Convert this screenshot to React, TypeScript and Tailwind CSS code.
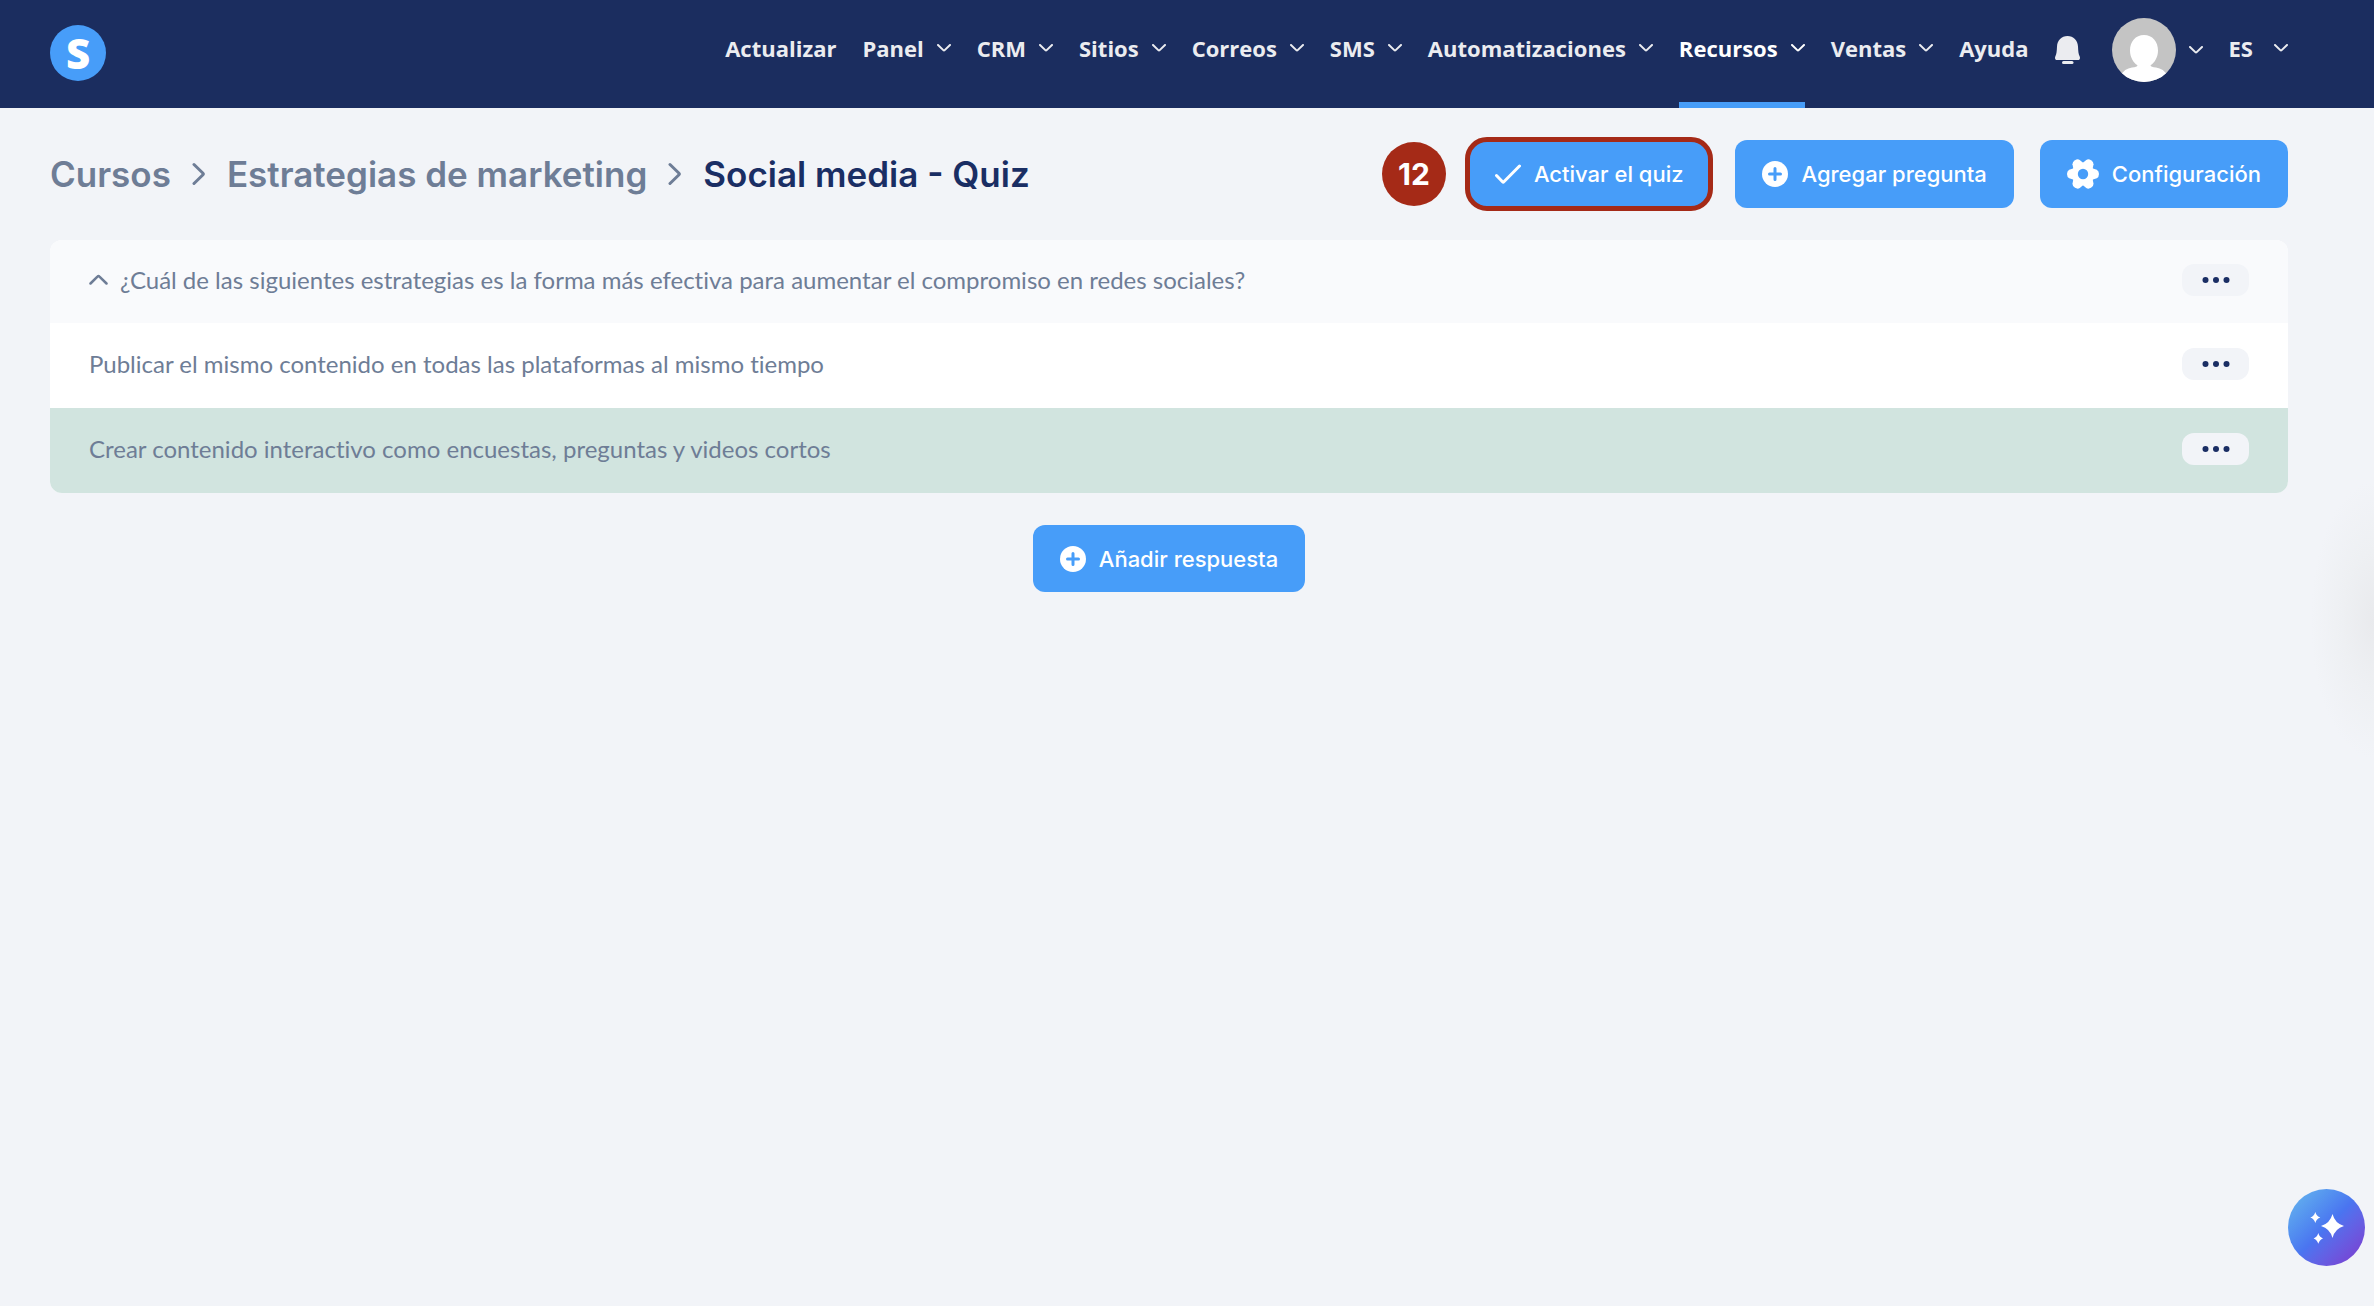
import { clsx } from 'clsx';
import type { ReactNode } from 'react';

const navItems = [
  { label: 'Actualizar', menu: false },
  { label: 'Panel', menu: true },
  { label: 'CRM', menu: true },
  { label: 'Sitios', menu: true },
  { label: 'Correos', menu: true },
  { label: 'SMS', menu: true },
  { label: 'Automatizaciones', menu: true },
  { label: 'Recursos', menu: true, active: true },
  { label: 'Ventas', menu: true },
  { label: 'Ayuda', menu: false },
];

const answers = [
  { text: 'Publicar el mismo contenido en todas las plataformas al mismo tiempo', correct: false },
  { text: 'Crear contenido interactivo como encuestas, preguntas y videos cortos', correct: true },
];

function ChevronDown() {
  return (
    <svg width="14" height="8" viewBox="0 0 14 8" fill="none" stroke="currentColor" strokeWidth="2" strokeLinecap="round" strokeLinejoin="round" aria-hidden="true">
      <path d="M1 1l5.3 5.1a1 1 0 0 0 1.4 0L13 1" />
    </svg>
  );
}

function ChevronRight() {
  return (
    <svg width="14" height="24" viewBox="0 0 14 24" fill="none" stroke="currentColor" strokeWidth="3" strokeLinecap="round" strokeLinejoin="round" aria-hidden="true">
      <path d="M2 2.5l9 8.8a1 1 0 0 1 0 1.4l-9 8.8" />
    </svg>
  );
}

function PlusCircle() {
  return (
    <svg width="26" height="26" viewBox="0 0 26 26" aria-hidden="true">
      <circle cx="13" cy="13" r="13" fill="currentColor" />
      <path d="M13 7.5v11M7.5 13h11" stroke="#479df9" strokeWidth="3" strokeLinecap="round" />
    </svg>
  );
}

function Gear() {
  return (
    <svg width="32" height="32" viewBox="0 0 32 32" fill="currentColor" aria-hidden="true">
      <circle cx="16" cy="16" r="11.3" />
      {[0, 60, 120].map((angle) => (
        <path
          key={angle}
          transform={`rotate(${angle} 16 16)`}
          d="M6 10.500h20l3.800 1.300Q32 13 32 16t-2.200 4.200L26 21.500H6l-3.800-1.300Q0 19 0 16t2.200-4.200z"
        />
      ))}
      <circle cx="16" cy="16" r="5.2" fill="#479df9" />
    </svg>
  );
}

function Avatar() {
  return (
    <svg width="64" height="64" viewBox="0 0 64 64" className="rounded-full bg-[#c4c4c4]" role="img" aria-label="Perfil">
      <path
        fill="#fff"
        d="M32 17c8.500 0 14 6.500 14 15.500 0 6.500-3.200 12.200-7.500 14.800.3 1.500 2 2 5.500 2.200 5 .6 9 3.500 12 8.500V64H8v-6c3-5 7-7.900 12-8.500 3.500-.2 5.200-.7 5.500-2.200-4.300-2.600-7.500-8.300-7.500-14.800C18 23.500 23.500 17 32 17z"
      />
    </svg>
  );
}

function PrimaryButton({ icon, children, className }: { icon: ReactNode; children: ReactNode; className?: string }) {
  return (
    <button
      type="button"
      className={clsx('flex items-center gap-[13px] bg-[#479df9] text-[22px] leading-7 font-medium text-white', className)}
    >
      {icon}
      {children}
    </button>
  );
}

function MoreButton() {
  return (
    <button type="button" aria-label="Más opciones" className="flex h-8 w-[67px] items-center justify-center rounded-xl bg-[#f2f4f8]">
      <svg width="28" height="6" viewBox="0 0 28 6" fill="#1a2e64" aria-hidden="true">
        <circle cx="3.500" cy="3" r="3" />
        <circle cx="14" cy="3" r="3" />
        <circle cx="24.500" cy="3" r="3" />
      </svg>
    </button>
  );
}

function Header() {
  return (
    <header className="flex h-[108px] items-start justify-between bg-[#1b2d5f] pr-[86px] pl-[50px] font-['Open_Sans',sans-serif] text-[22px] leading-8 font-bold text-[#ebecf0]">
      <a
        href="#inicio"
        aria-label="Inicio"
        className="mt-[25px] flex size-14 items-center justify-center rounded-full bg-[#479df9] text-[42px] leading-none font-extrabold text-white"
      >
        S
      </a>
      <div className="flex">
        <nav className="flex gap-[26px]">
          {navItems.map((item) => (
            <a
              key={item.label}
              href={`#${item.label.toLowerCase()}`}
              className={clsx(
                'flex h-[108px] items-center gap-[13px] border-b-6 pb-1.5',
                item.active ? 'border-[#479df9] text-white' : 'border-transparent',
              )}
            >
              {item.label}
              {item.menu && <ChevronDown />}
            </a>
          ))}
        </nav>
        <div className="flex h-[100px] items-center">
          <button type="button" aria-label="Notificaciones" className="ml-[26px]">
            <svg width="25" height="28" viewBox="0 0 25 28" fill="currentColor" aria-hidden="true">
              <path d="M12.500 0C6.500 0 2.300 4.200 2 10.500c-.2 5-.5 7.500-1.600 9.800C-.5 22.300.2 24 2 24h21c1.800 0 2.500-1.700 1.600-3.700-1.100-2.300-1.400-4.800-1.600-9.800C22.700 4.200 18.500 0 12.500 0z" />
              <rect x="7" y="25" width="11.500" height="3" rx="1.500" />
            </svg>
          </button>
          <button type="button" aria-label="Cuenta" className="ml-8 flex items-center gap-[13px]">
            <Avatar />
            <ChevronDown />
          </button>
          <button type="button" className="ml-[26px] flex items-center gap-[21px] pb-1">
            ES
            <ChevronDown />
          </button>
        </div>
      </div>
    </header>
  );
}

export default function App() {
  return (
    <div className="min-h-screen bg-[#f2f4f8] font-['Inter',sans-serif]">
      <Header />
      <main className="pr-[86px] pl-[50px]">
        <div className="flex h-[132px] items-center justify-between">
          <nav aria-label="Ruta" className="flex items-center gap-[21px] text-[35px] leading-10 font-semibold text-[#6e7d96]">
            <a href="#cursos">Cursos</a>
            <ChevronRight />
            <a href="#estrategias">Estrategias de marketing</a>
            <ChevronRight />
            <h1 className="text-[#1a2e64]">Social media - Quiz</h1>
          </nav>
          <div className="flex items-center">
            <span className="mr-[19px] flex size-16 items-center justify-center rounded-full bg-[#a52a17] text-[30px] leading-none font-bold text-white">
              12
            </span>
            <PrimaryButton
              className="mr-[22px] h-[74px] rounded-[22px] border-5 border-[#a52a17] px-[25px]"
              icon={
                <svg width="26" height="20" viewBox="0 0 26 20" fill="none" stroke="currentColor" strokeWidth="3" strokeLinecap="round" strokeLinejoin="round" aria-hidden="true">
                  <path d="M1.500 11.500l6 6.200a1 1 0 0 0 1.400 0L24.500 2" />
                </svg>
              }
            >
              Activar el quiz
            </PrimaryButton>
            <PrimaryButton className="mr-[26px] h-[68px] rounded-xl px-[27px]" icon={<PlusCircle />}>
              Agregar pregunta
            </PrimaryButton>
            <PrimaryButton className="h-[68px] rounded-xl px-[27px]" icon={<Gear />}>
              Configuración
            </PrimaryButton>
          </div>
        </div>

        <section className="overflow-hidden rounded-xl bg-white font-['Lato',sans-serif] text-2xl text-[#6e7d96] [font-variant-ligatures:none]">
          <div className="flex h-[83px] items-center justify-between bg-[#f9fafc] px-[39px] pb-1">
            <button type="button" aria-expanded="true" className="flex items-center gap-3">
              <svg width="19" height="11" viewBox="0 0 19 11" fill="none" stroke="currentColor" strokeWidth="2.500" strokeLinecap="round" strokeLinejoin="round" aria-hidden="true">
                <path d="M1.500 9.500l7.200-7.200a1 1 0 0 1 1.500 0l7.300 7.200" />
              </svg>
              ¿Cuál de las siguientes estrategias es la forma más efectiva para aumentar el compromiso en redes sociales?
            </button>
            <MoreButton />
          </div>
          <ul>
            {answers.map((answer) => (
              <li
                key={answer.text}
                className={clsx('flex h-[85px] items-center justify-between px-[39px] pb-1', answer.correct && 'bg-[#d1e4df]')}
              >
                {answer.text}
                <MoreButton />
              </li>
            ))}
          </ul>
        </section>

        <div className="flex justify-center pt-8">
          <PrimaryButton className="h-[67px] rounded-xl px-[27px]" icon={<PlusCircle />}>
            Añadir respuesta
          </PrimaryButton>
        </div>
      </main>

      <div className="pointer-events-none fixed top-[480px] right-0 h-[280px] w-16 bg-[radial-gradient(ellipse_at_right,#e9eaed,#eef0f3_35%,#f2f4f8_70%)]" />

      <button
        type="button"
        aria-label="Asistente de IA"
        className="fixed right-[9px] bottom-10 flex size-[77px] items-center justify-center rounded-full bg-linear-to-br from-[#62adee] from-10% via-[#4a74f0] via-50% to-[#7a3bd0] to-95%"
      >
        <svg width="34" height="34" viewBox="0 0 34 34" fill="#fff" aria-hidden="true">
          <path d="M22.500 3q2.400 9.400 11.500 12-9.100 2.600-11.500 12Q20 17.600 11 15q9-2.600 11.500-12z" />
          <path d="M5.300 1q1.200 4.300 5 5.500-3.800 1.200-5 5.500-1.200-4.300-5-5.500 3.800-1.200 5-5.500z" />
          <path d="M8.300 22q1.200 4.200 4.700 5.400-3.500 1.200-4.700 5.400-1.200-4.200-4.700-5.400 3.500-1.200 4.700-5.400z" />
        </svg>
      </button>
    </div>
  );
}
